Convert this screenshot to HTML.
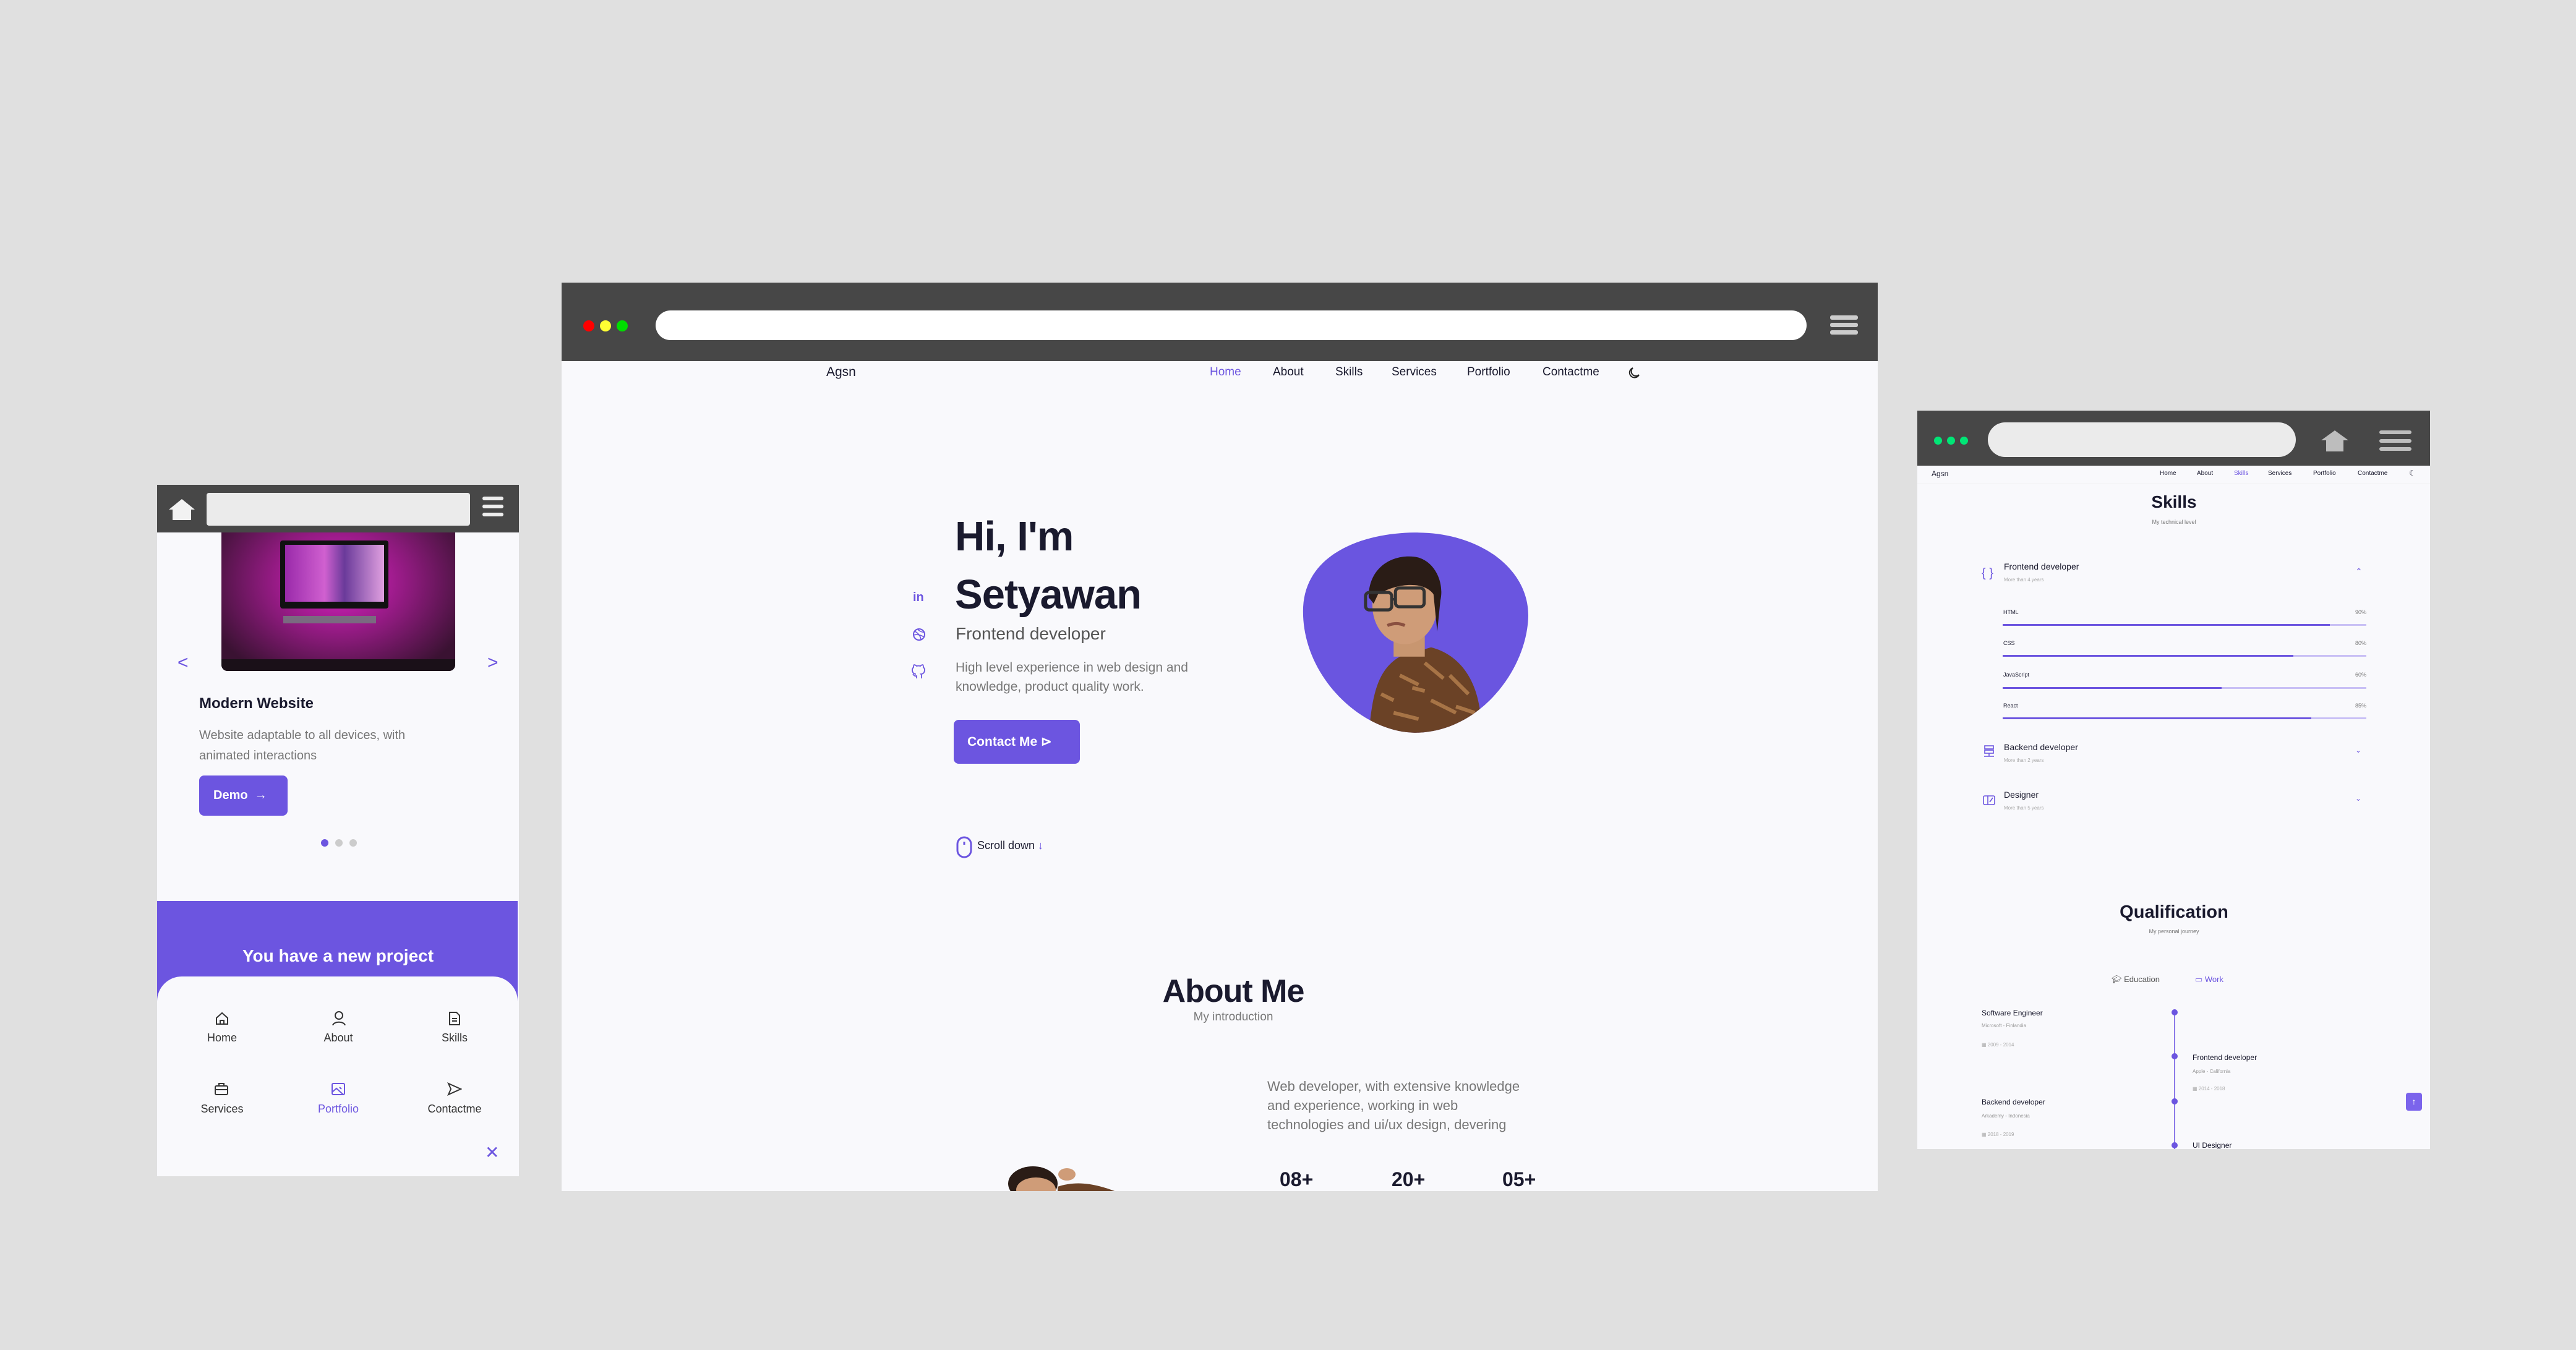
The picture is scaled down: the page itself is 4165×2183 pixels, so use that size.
<!DOCTYPE html>
<html><head><meta charset="utf-8"><style>
*{margin:0;padding:0;box-sizing:border-box}
body{width:4165px;height:2183px;background:#e0e0e0;position:relative;overflow:hidden;font-family:"Liberation Sans",sans-serif;color:#1a1a2e}
.a{position:absolute;white-space:nowrap}
.p{color:#6c55e0}
.g{color:#777}
</style></head><body>

<!-- MAIN BROWSER -->
<div class="a" style="left:908px;top:457px;width:2128px;height:1469px;background:#f9f9fc;overflow:hidden">
  <div class="a" style="left:0;top:0;width:2128px;height:127px;background:#474747"></div>
  <div class="a" style="left:35px;top:61px;width:18px;height:18px;border-radius:50%;background:#f00"></div>
  <div class="a" style="left:62px;top:61px;width:18px;height:18px;border-radius:50%;background:#ff3"></div>
  <div class="a" style="left:89px;top:61px;width:18px;height:18px;border-radius:50%;background:#0d0"></div>
  <div class="a" style="left:152px;top:45px;width:1861px;height:48px;border-radius:24px;background:#fff"></div>
  <div class="a" style="left:2051px;top:53px;width:45px;height:7px;border-radius:3px;background:#ccc"></div>
  <div class="a" style="left:2051px;top:65px;width:45px;height:7px;border-radius:3px;background:#ccc"></div>
  <div class="a" style="left:2051px;top:77px;width:45px;height:7px;border-radius:3px;background:#ccc"></div>

  <div class="a" style="left:428px;top:133px;font-size:21px">Agsn</div>
  <div class="a p" style="left:1048px;top:134px;font-size:19px">Home</div>
  <div class="a" style="left:1150px;top:134px;font-size:19px">About</div>
  <div class="a" style="left:1251px;top:134px;font-size:19px">Skills</div>
  <div class="a" style="left:1342px;top:134px;font-size:19px">Services</div>
  <div class="a" style="left:1464px;top:134px;font-size:19px">Portfolio</div>
  <div class="a" style="left:1586px;top:134px;font-size:19px">Contactme</div>
  <svg class="a" style="left:1722px;top:134px" width="24" height="24" viewBox="0 0 24 24"><path d="M20 15A8 8 0 1 1 10 4a6.5 6.5 0 0 0 10 11z" fill="none" stroke="#222" stroke-width="2"/></svg>

  <div class="a" style="left:636px;top:372px;font-size:67px;font-weight:bold;letter-spacing:-1px">Hi, I'm</div>
  <div class="a" style="left:636px;top:466px;font-size:67px;font-weight:bold;letter-spacing:-1px">Setyawan</div>
  <div class="a" style="left:637px;top:552px;font-size:28px;color:#555">Frontend developer</div>
  <div class="a g" style="left:637px;top:607px;font-size:21px;line-height:31px">High level experience in web design and<br>knowledge, product quality work.</div>
  <div class="a" style="left:634px;top:707px;width:204px;height:71px;border-radius:8px;background:#6c55e0;color:#fff;font-size:21px;font-weight:bold;line-height:71px;padding-left:22px">Contact Me ⊳</div>

  <div class="a p" style="left:568px;top:498px;font-size:20px;font-weight:bold">in</div>
  <svg class="a" style="left:566px;top:557px" width="24" height="24" viewBox="0 0 24 24"><circle cx="12" cy="12" r="9" fill="none" stroke="#6c55e0" stroke-width="2"/><path d="M5 7c5 2 10 8 10 14M3 13c6-2 12 0 17 3M9 3c4 4 8 6 12 5" fill="none" stroke="#6c55e0" stroke-width="1.5"/></svg>
  <svg class="a" style="left:566px;top:616px" width="24" height="26" viewBox="0 0 24 26"><path d="M8 24v-4c-4 1-5-2-6-3M16 24v-4c0-2-1-3-1-3 3 0 6-2 6-7 0-1-1-3-2-4 0-2 0-3-1-4-1 0-3 1-4 2a12 12 0 0 0-6 0C7 3 5 2 4 2c-1 1-1 2-1 4-1 1-2 3-2 4 0 5 3 7 6 7" fill="none" stroke="#6c55e0" stroke-width="1.8"/></svg>

  <svg class="a" style="left:637px;top:895px" width="28" height="36" viewBox="0 0 28 36"><rect x="3" y="2" width="22" height="32" rx="11" fill="none" stroke="#6c55e0" stroke-width="3"/><line x1="14" y1="9" x2="14" y2="14" stroke="#6c55e0" stroke-width="3"/></svg>
  <div class="a" style="left:672px;top:900px;font-size:18px">Scroll down <span class="p">↓</span></div>

  <svg class="a" style="left:1194px;top:403px" width="370" height="326" viewBox="0 0 367 323">
    <defs><clipPath id="bl"><path d="M5 120C10 30 110 0 190 1C290 2 367 60 366 135C364 220 290 318 190 322C100 325 0 230 5 120Z"/></clipPath></defs>
    <path d="M5 120C10 30 110 0 190 1C290 2 367 60 366 135C364 220 290 318 190 322C100 325 0 230 5 120Z" fill="#6a55e0"/>
    <g clip-path="url(#bl)">
      <path d="M110 330C115 260 125 220 160 200L210 185C250 195 285 230 290 300L295 330Z" fill="#6b4226"/>
      <path d="M130 260l20 10M160 230l30 15M200 210l30 25M240 230l30 30M150 290l40 10M210 270l40 20M180 250l20 5M250 280l30 10" stroke="#c08a55" stroke-width="6" opacity=".7"/>
      <rect x="150" y="150" width="50" height="50" fill="#c89670"/>
      <ellipse cx="168" cy="118" rx="52" ry="62" fill="#cf9c78"/>
      <path d="M110 105C110 55 150 35 185 40C215 45 232 80 225 110L220 160L214 100C200 80 160 80 125 100L118 115Z" fill="#2a1c16"/>
      <rect x="105" y="97" width="42" height="28" rx="6" fill="none" stroke="#333" stroke-width="5"/>
      <rect x="153" y="90" width="46" height="30" rx="6" fill="none" stroke="#333" stroke-width="5"/>
      <path d="M147 108h6" stroke="#333" stroke-width="4"/>
      <path d="M140 150q15-6 28 0" stroke="#8a5040" stroke-width="5" fill="none"/>
    </g>
  </svg>

  <div class="a" style="left:0;width:2172px;text-align:center;top:1116px;font-size:52px;font-weight:bold;letter-spacing:-1px">About Me</div>
  <div class="a g" style="left:0;width:2172px;text-align:center;top:1177px;font-size:19px">My introduction</div>
  <div class="a g" style="left:1141px;top:1284px;font-size:22px;line-height:31px">Web developer, with extensive knowledge<br>and experience, working in web<br>technologies and ui/ux design, devering</div>
  <div class="a" style="left:1161px;top:1432px;font-size:32px;font-weight:bold">08+</div>
  <div class="a" style="left:1342px;top:1432px;font-size:32px;font-weight:bold">20+</div>
  <div class="a" style="left:1521px;top:1432px;font-size:32px;font-weight:bold">05+</div>
  <svg class="a" style="left:712px;top:1422px" width="220" height="50" viewBox="0 0 220 50"><ellipse cx="50" cy="35" rx="40" ry="28" fill="#2a1c16"/><ellipse cx="55" cy="45" rx="32" ry="20" fill="#cf9c78"/><path d="M90 40c30-10 60-6 100 10H90z" fill="#6b4226"/><ellipse cx="105" cy="20" rx="14" ry="10" fill="#cf9c78"/></svg>
</div>

<!-- LEFT PHONE -->
<div class="a" style="left:254px;top:784px;width:585px;height:1118px;background:#f9f9fc;overflow:hidden">
  <div class="a" style="left:0;top:0;width:585px;height:77px;background:#474747"></div>
  <svg class="a" style="left:19px;top:23px" width="42" height="34" viewBox="0 0 42 34"><path d="M0 17L21 0L42 17H36V34H6V17Z" fill="#f2f2f2"/></svg>
  <div class="a" style="left:80px;top:13px;width:426px;height:53px;border-radius:4px;background:#ebebeb"></div>
  <div class="a" style="left:526px;top:19px;width:34px;height:6px;border-radius:3px;background:#eee"></div>
  <div class="a" style="left:526px;top:32px;width:34px;height:6px;border-radius:3px;background:#eee"></div>
  <div class="a" style="left:526px;top:45px;width:34px;height:6px;border-radius:3px;background:#eee"></div>
  <div class="a" style="left:104px;top:77px;width:378px;height:224px;border-radius:0 0 10px 10px;background:radial-gradient(ellipse at 50% 35%,#e020c8 0%,#8a1a7a 45%,#3a1232 85%);overflow:hidden">
    <div class="a" style="left:95px;top:13px;width:175px;height:110px;background:#111;border-radius:4px"></div>
    <div class="a" style="left:103px;top:20px;width:160px;height:92px;background:linear-gradient(90deg,#9a2aaa,#d060d0 40%,#6a3a9a 60%,#e0a0e0)"></div>
    <div class="a" style="left:100px;top:135px;width:150px;height:12px;background:#7a6a80"></div>
    <div class="a" style="left:0;top:205px;width:378px;height:19px;background:#1a1018"></div>
  </div>
  <div class="a p" style="left:33px;top:271px;font-size:30px">&lt;</div>
  <div class="a p" style="left:534px;top:271px;font-size:30px">&gt;</div>
  <div class="a" style="left:68px;top:340px;font-size:24px;font-weight:bold">Modern Website</div>
  <div class="a g" style="left:68px;top:389px;font-size:20px;line-height:33px">Website adaptable to all devices, with<br>animated interactions</div>
  <div class="a" style="left:68px;top:470px;width:143px;height:65px;border-radius:8px;background:#6c55e0;color:#fff;font-size:20px;font-weight:bold;line-height:65px;padding-left:23px">Demo &nbsp;→</div>
  <div class="a" style="left:265px;top:573px;width:12px;height:12px;border-radius:50%;background:#6c55e0"></div>
  <div class="a" style="left:288px;top:573px;width:12px;height:12px;border-radius:50%;background:#ccc"></div>
  <div class="a" style="left:311px;top:573px;width:12px;height:12px;border-radius:50%;background:#ccc"></div>
  <div class="a" style="left:0;top:673px;width:583px;height:180px;background:#6c55e0"></div>
  <div class="a" style="left:0;width:585px;text-align:center;top:746px;font-size:28px;font-weight:bold;color:#fff">You have a new project</div>
  <div class="a" style="left:0;top:795px;width:583px;height:330px;border-radius:40px 40px 0 0;background:#f9f9fc"></div>
  <svg class="a" style="left:94px;top:852px" width="22" height="22" viewBox="0 0 22 22"><path d="M2 10L11 2L20 10V20H2Z M8 20v-6h6v6" fill="none" stroke="#333" stroke-width="2"/></svg>
  <svg class="a" style="left:282px;top:850px" width="24" height="26" viewBox="0 0 24 26"><circle cx="12" cy="8" r="6" fill="none" stroke="#333" stroke-width="2"/><path d="M2 24c2-7 18-7 20 0" fill="none" stroke="#333" stroke-width="2"/></svg>
  <svg class="a" style="left:471px;top:852px" width="20" height="22" viewBox="0 0 20 22"><path d="M2 1h11l5 5v15H2Z M6 11h8M6 15h8" fill="none" stroke="#333" stroke-width="2"/></svg>
  <div class="a" style="left:55px;top:884px;width:100px;text-align:center;font-size:18px;color:#333">Home</div>
  <div class="a" style="left:243px;top:884px;width:100px;text-align:center;font-size:18px;color:#333">About</div>
  <div class="a" style="left:431px;top:884px;width:100px;text-align:center;font-size:18px;color:#333">Skills</div>
  <svg class="a" style="left:92px;top:966px" width="24" height="22" viewBox="0 0 24 22"><rect x="2" y="6" width="20" height="14" rx="2" fill="none" stroke="#333" stroke-width="2"/><path d="M8 6V2h8v4M2 12h20" fill="none" stroke="#333" stroke-width="2"/></svg>
  <svg class="a" style="left:281px;top:966px" width="24" height="22" viewBox="0 0 24 22"><rect x="2" y="2" width="20" height="18" rx="2" fill="none" stroke="#6c55e0" stroke-width="2"/><path d="M2 16l7-6 11 10M14 8l3 3" fill="none" stroke="#6c55e0" stroke-width="2"/></svg>
  <svg class="a" style="left:469px;top:966px" width="24" height="22" viewBox="0 0 24 22"><path d="M2 2L22 11L2 20L6 11Z" fill="none" stroke="#333" stroke-width="2"/></svg>
  <div class="a" style="left:35px;top:999px;width:140px;text-align:center;font-size:18px;color:#333">Services</div>
  <div class="a p" style="left:223px;top:999px;width:140px;text-align:center;font-size:18px">Portfolio</div>
  <div class="a" style="left:411px;top:999px;width:140px;text-align:center;font-size:18px;color:#333">Contactme</div>
  <div class="a p" style="left:530px;top:1063px;font-size:28px">✕</div>
</div>

<!-- RIGHT WINDOW -->
<div class="a" style="left:3100px;top:664px;width:829px;height:1194px;background:#f9f9fc;overflow:hidden">
  <div class="a" style="left:0;top:0;width:829px;height:89px;background:#474747"></div>
  <div class="a" style="left:27px;top:42px;width:13px;height:13px;border-radius:50%;background:#00e676"></div>
  <div class="a" style="left:48px;top:42px;width:13px;height:13px;border-radius:50%;background:#00e676"></div>
  <div class="a" style="left:69px;top:42px;width:13px;height:13px;border-radius:50%;background:#00e676"></div>
  <div class="a" style="left:114px;top:19px;width:498px;height:56px;border-radius:28px;background:#ebebeb"></div>
  <svg class="a" style="left:653px;top:32px" width="44" height="34" viewBox="0 0 44 34"><path d="M0 16L22 0L44 16H36V34H8V16Z" fill="#bdbdbd"/></svg>
  <div class="a" style="left:747px;top:32px;width:52px;height:6px;border-radius:3px;background:#bdbdbd"></div>
  <div class="a" style="left:747px;top:46px;width:52px;height:6px;border-radius:3px;background:#bdbdbd"></div>
  <div class="a" style="left:747px;top:59px;width:52px;height:6px;border-radius:3px;background:#bdbdbd"></div>
  <div class="a" style="left:23px;top:95px;font-size:12px">Agsn</div>
  <div class="a" style="left:392px;top:96px;font-size:10px">Home</div>
  <div class="a" style="left:452px;top:96px;font-size:10px">About</div>
  <div class="a p" style="left:512px;top:96px;font-size:10px">Skills</div>
  <div class="a" style="left:567px;top:96px;font-size:10px">Services</div>
  <div class="a" style="left:640px;top:96px;font-size:10px">Portfolio</div>
  <div class="a" style="left:712px;top:96px;font-size:10px">Contactme</div>
  <div class="a" style="left:795px;top:94px;font-size:12px">☾</div>
  <div class="a" style="left:0;top:118px;width:829px;height:1px;background:#eee"></div>
  <div class="a" style="left:0;width:830px;text-align:center;top:132px;font-size:28px;font-weight:bold">Skills</div>
  <div class="a g" style="left:0;width:830px;text-align:center;top:175px;font-size:9px">My technical level</div>

  <div class="a p" style="left:104px;top:252px;font-size:20px">{ }</div>
  <div class="a" style="left:140px;top:244px;font-size:14px">Frontend developer</div>
  <div class="a" style="left:140px;top:269px;font-size:8px;color:#aaa">More than 4 years</div>
  <div class="a p" style="left:708px;top:252px;font-size:14px">⌃</div>

  <div class="a" style="left:139px;top:321px;font-size:9px">HTML</div><div class="a g" style="left:700px;width:26px;text-align:right;top:321px;font-size:9px">90%</div>
  <div class="a" style="left:138px;top:345px;width:588px;height:3px;background:#c9c0f5"></div><div class="a" style="left:138px;top:345px;width:529px;height:3px;background:#6c55e0"></div>
  <div class="a" style="left:139px;top:371px;font-size:9px">CSS</div><div class="a g" style="left:700px;width:26px;text-align:right;top:371px;font-size:9px">80%</div>
  <div class="a" style="left:138px;top:395px;width:588px;height:3px;background:#c9c0f5"></div><div class="a" style="left:138px;top:395px;width:470px;height:3px;background:#6c55e0"></div>
  <div class="a" style="left:139px;top:422px;font-size:9px">JavaScript</div><div class="a g" style="left:700px;width:26px;text-align:right;top:422px;font-size:9px">60%</div>
  <div class="a" style="left:138px;top:447px;width:588px;height:3px;background:#c9c0f5"></div><div class="a" style="left:138px;top:447px;width:354px;height:3px;background:#6c55e0"></div>
  <div class="a" style="left:139px;top:472px;font-size:9px">React</div><div class="a g" style="left:700px;width:26px;text-align:right;top:472px;font-size:9px">85%</div>
  <div class="a" style="left:138px;top:496px;width:588px;height:3px;background:#c9c0f5"></div><div class="a" style="left:138px;top:496px;width:499px;height:3px;background:#6c55e0"></div>

  <svg class="a" style="left:106px;top:541px" width="20" height="20" viewBox="0 0 20 20"><rect x="3" y="1" width="14" height="5" fill="none" stroke="#6c55e0" stroke-width="1.6"/><rect x="3" y="8" width="14" height="5" fill="none" stroke="#6c55e0" stroke-width="1.6"/><path d="M10 13v4M2 18h16" stroke="#6c55e0" stroke-width="1.6"/></svg>
  <div class="a" style="left:140px;top:536px;font-size:14px">Backend developer</div>
  <div class="a" style="left:140px;top:561px;font-size:8px;color:#aaa">More than 2 years</div>
  <div class="a p" style="left:708px;top:542px;font-size:12px">⌄</div>
  <svg class="a" style="left:106px;top:621px" width="20" height="18" viewBox="0 0 20 18"><rect x="1" y="2" width="18" height="14" rx="2" fill="none" stroke="#6c55e0" stroke-width="1.6"/><path d="M8 2v14M11 12l5-7" stroke="#6c55e0" stroke-width="1.6"/></svg>
  <div class="a" style="left:140px;top:613px;font-size:14px">Designer</div>
  <div class="a" style="left:140px;top:638px;font-size:8px;color:#aaa">More than 5 years</div>
  <div class="a p" style="left:708px;top:620px;font-size:12px">⌄</div>

  <div class="a" style="left:0;width:830px;text-align:center;top:795px;font-size:29px;font-weight:bold">Qualification</div>
  <div class="a g" style="left:0;width:830px;text-align:center;top:837px;font-size:9px">My personal journey</div>
  <div class="a" style="left:314px;top:912px;font-size:13px;color:#555">🎓︎ Education</div>
  <div class="a p" style="left:449px;top:912px;font-size:13px">▭ Work</div>

  <div class="a" style="left:415px;top:973px;width:2px;height:230px;background:#8c7ae8"></div>
  <div class="a" style="left:411px;top:968px;width:10px;height:10px;border-radius:50%;background:#6c55e0"></div>
  <div class="a" style="left:411px;top:1039px;width:10px;height:10px;border-radius:50%;background:#6c55e0"></div>
  <div class="a" style="left:411px;top:1112px;width:10px;height:10px;border-radius:50%;background:#6c55e0"></div>
  <div class="a" style="left:411px;top:1183px;width:10px;height:10px;border-radius:50%;background:#6c55e0"></div>

  <div class="a" style="left:104px;top:967px;font-size:12px">Software Engineer</div>
  <div class="a" style="left:104px;top:990px;font-size:8px;color:#999">Microsoft - Finlandia</div>
  <div class="a" style="left:104px;top:1021px;font-size:8px;color:#aaa">▦ 2009 - 2014</div>
  <div class="a" style="left:445px;top:1039px;font-size:12px">Frontend developer</div>
  <div class="a" style="left:445px;top:1064px;font-size:8px;color:#999">Apple - California</div>
  <div class="a" style="left:445px;top:1092px;font-size:8px;color:#aaa">▦ 2014 - 2018</div>
  <div class="a" style="left:104px;top:1111px;font-size:12px">Backend developer</div>
  <div class="a" style="left:104px;top:1136px;font-size:8px;color:#999">Arkademy - Indonesia</div>
  <div class="a" style="left:104px;top:1166px;font-size:8px;color:#aaa">▦ 2018 - 2019</div>
  <div class="a" style="left:445px;top:1181px;font-size:12px">UI Designer</div>

  <div class="a" style="left:790px;top:1103px;width:26px;height:29px;border-radius:4px;background:#7b64ec;color:#fff;font-size:14px;text-align:center;line-height:29px">↑</div>
</div>
</body></html>
